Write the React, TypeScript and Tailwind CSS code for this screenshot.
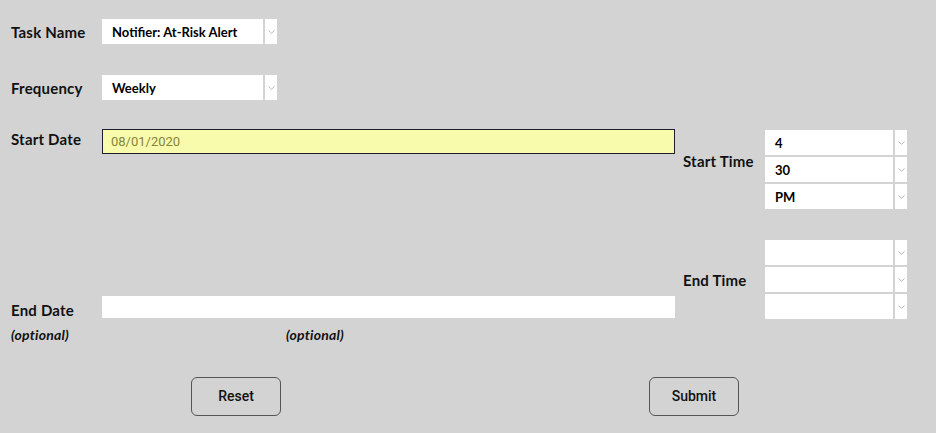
const Chevron = () => (
  <svg width="7" height="4" viewBox="0 0 7 4" fill="none">
    <path d="M0.5 0.5 L3.5 3.2 L6.5 0.5" stroke="#b5b5b5" strokeWidth="1" />
  </svg>
);

const SelectBox = ({ value, width, height }: { value?: string; width: string; height: string }) => (
  <div className={`flex bg-white ${width} ${height}`}>
    <div className="flex-1 flex items-center pl-[10px] pt-[2px] text-[13px] font-bold text-black">{value}</div>
    <div className="w-[2px] bg-[#d3d3d3]" />
    <div className="w-[12px] flex items-center justify-center">
      <Chevron />
    </div>
  </div>
);

const labelCls = "text-[15px] font-bold text-[#111] leading-[20px] tracking-[0.2px]";

const TimeSelects = ({ values }: { values: string[] }) => (
  <div className="flex flex-col gap-[2px] w-[142px]">
    {values.map((v, i) => (
      <SelectBox key={i} value={v} width="w-[142px]" height="h-[25px]" />
    ))}
  </div>
);

export default function App() {
  return (
    <div className="w-[936px] h-[433px] bg-[#d3d3d3] font-['Lato','Open_Sans',sans-serif] overflow-hidden">
      <div className="flex items-center h-[25px] mt-[19px] pl-[11px]">
        <div className={`${labelCls} w-[91px]`}>Task Name</div>
        <SelectBox value="Notifier: At-Risk Alert" width="w-[175px]" height="h-[25px]" />
      </div>
      <div className="flex items-center h-[25px] mt-[31px] pl-[11px]">
        <div className={`${labelCls} w-[91px]`}>Frequency</div>
        <SelectBox value="Weekly" width="w-[175px]" height="h-[25px]" />
      </div>

      <div className="flex mt-[29px]">
        <div className="w-[675px] pl-[11px] flex flex-col">
          <div className="flex items-start">
            <div className={`${labelCls} w-[91px]`}>Start Date</div>
            <div className="w-[573px] h-[25px] bg-[#f8fbab] border border-[#1c1f2a] flex items-center pl-[8px] font-['Roboto',Arial,sans-serif] text-[13px] text-[#85853a]">
              08/01/2020
            </div>
          </div>
          <div className="flex items-start mt-[142px]">
            <div className={`${labelCls} w-[91px] mt-[4px]`}>End Date</div>
            <div className="w-[573px] h-[22px] bg-white" />
          </div>
          <div className="flex mt-[5px] text-[14px] font-bold italic text-[#111] leading-[20px] tracking-[0.2px]">
            <div className="w-[275px]">(optional)</div>
            <div>(optional)</div>
          </div>
        </div>

        <div className="ml-[8px] mt-[1px] flex flex-col">
          <div className="flex items-start">
            <div className={`${labelCls} w-[82px] mt-[21px]`}>Start Time</div>
            <TimeSelects values={["4", "30", "PM"]} />
          </div>
          <div className="flex items-start mt-[31px]">
            <div className={`${labelCls} w-[82px] mt-[30px]`}>End Time</div>
            <TimeSelects values={["", "", ""]} />
          </div>
        </div>
      </div>

      <div className="flex mt-[32px] pl-[191px] gap-[368px] font-['Roboto',Arial,sans-serif]">
        <button className="w-[90px] h-[39px] rounded-[6px] border border-[#555] bg-[#d3d3d3] text-[14px] font-medium text-[#111]">
          Reset
        </button>
        <button className="w-[90px] h-[39px] rounded-[6px] border border-[#555] bg-[#d3d3d3] text-[14px] font-medium text-[#111]">
          Submit
        </button>
      </div>
    </div>
  );
}
